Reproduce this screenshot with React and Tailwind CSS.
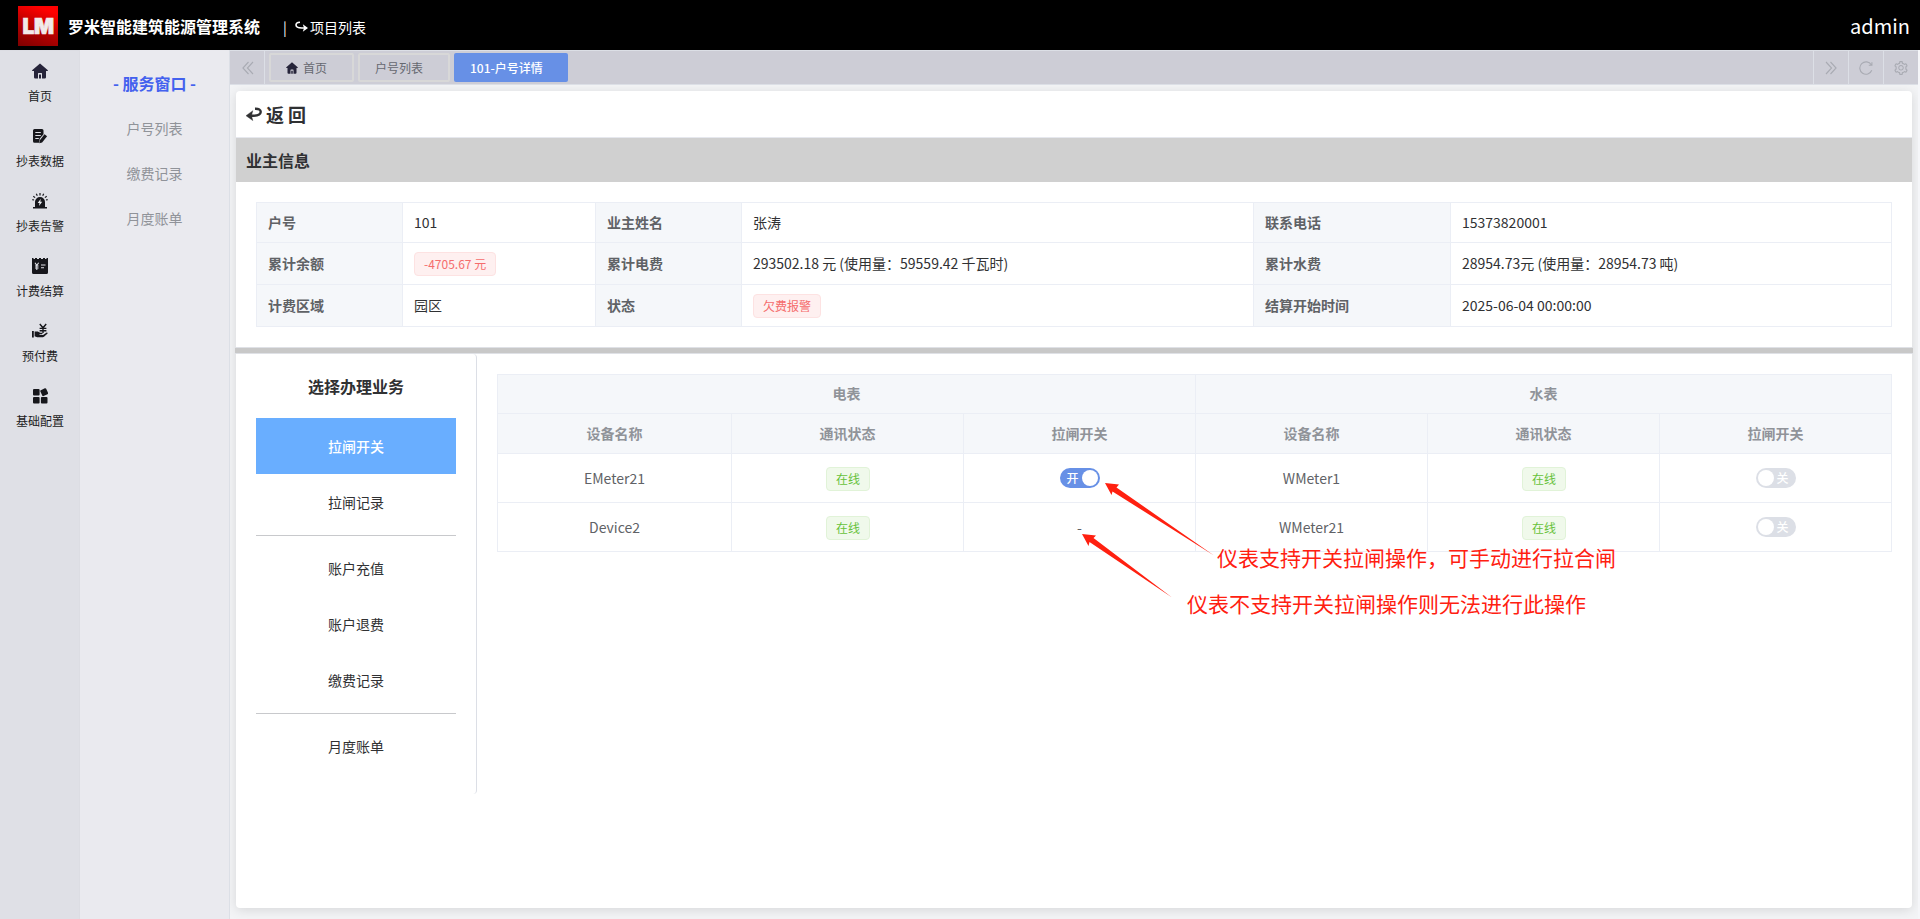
import { AiOutlineSetting } from 'react-icons/ai'

const HomeIcon = ({ className = '' }) => (
  <svg viewBox="0 0 16 16" className={`shrink-0 ${className}`} fill="#26243a">
    <path d="M8 .4 15.6 6.9c.6.5.3 1.1-.4 1.1H14v6.200q0 1.300-1.300 1.300H10V10.500q0-.5-.5-.5h-3q-.5 0-.5.5v5H3.300Q2 15.500 2 14.200V8H.8C.1 8-.2 7.400.4 6.900Z" />
    <path d="M7 11.500h2v4H7z" />
  </svg>
)

const ReadingIcon = ({ className = '' }) => (
  <svg viewBox="0 0 16 16" className={className} fill="#17171c">
    <path d="M2.500 1h7.500q1.500 0 1.500 1.500v3.800L7.800 10.500 7 14.800H2.500Q1 14.800 1 13.300V2.500Q1 1 2.500 1Z" />
    <path d="M3.300 4.500h5.500M3.300 7.500h5.500M3.300 10.500h3.500" stroke="#dfe0e6" strokeWidth="1" fill="none" />
    <path d="m12.500 6.200 2.600 2-5 6.200-2.800.9.400-2.900z" />
  </svg>
)

const AlarmIcon = ({ className = '' }) => (
  <svg viewBox="0 0 16 16" className={className} fill="#17171c">
    <path d="M3 14V9a5 5 0 0 1 10 0v5h2v1.500H1V14z" />
    <path d="M8 0v2.500M4.300.8l1 2M11.700.8l-1 2M1.300 3.200l1.800 1.400M14.700 3.200l-1.800 1.400M.3 6.600l1.700.4M15.700 6.600 14 7" stroke="#17171c" strokeWidth="1.200" />
    <path d="M8.800 5.800 5.700 10h1.800l-.5 3 3.200-4.200H8.300z" fill="#eef0f4" />
  </svg>
)

const BillIcon = ({ className = '' }) => (
  <svg viewBox="0 0 16 16" className={className} fill="#17171c">
    <path d="M0 0h1.500v1h1.500V0h2v1h2V0h2v1h2V0h2v1h1.500V0H16v14.500q0 1.500-1.500 1.500h-13Q0 16 0 14.500Z" />
    <path d="m3 4.800 1.800 2.700 1.800-2.700M4.800 7.500v4.500M3 8h3.600M3 10h3.600M9 7h4.500M9 9.800h3" stroke="#dfe0e6" strokeWidth="1.100" fill="none" />
  </svg>
)

const PrepayIcon = ({ className = '' }) => (
  <svg viewBox="0 0 16 16" className={className} fill="#17171c">
    <path d="M0 8h1.800v6.500H0zM2.600 8.500h3.200l2.400 1.200h2q1 .9-.2 1.600H7.500v.6h3.600l3.600-2.300q1.200 0 .9 1l-3.600 3.200q-.6.400-1.200.4H5.200l-2.600-1z" />
    <path d="m7.800 1 3.200 3.800L14.200 1M11 4.800V10M7.600 5.400h6.800M7.600 7.800h6.800" stroke="#17171c" strokeWidth="1.400" fill="none" />
  </svg>
)

const ConfigIcon = ({ className = '' }) => (
  <svg viewBox="0 0 16 16" className={className} fill="#17171c">
    <rect x="1" y="1" width="6.600" height="6.600" rx="1" />
    <rect x="1" y="8.900" width="6.600" height="6.600" rx="1" />
    <rect x="8.900" y="8.900" width="6.600" height="6.600" rx="1" />
    <rect x="9" y="1" width="6.400" height="6.400" rx="1" transform="rotate(-25 12.200 4.200)" />
  </svg>
)

const BackIcon = () => (
  <svg viewBox="0 0 16 14" className="w-4 h-3.5 shrink-0" fill="none" stroke="#303133">
    <path d="M9 1.800q5.800-.2 5.700 3.200-.2 3.700-7.200 3.700H3" strokeWidth="2.400" />
    <path d="M6.800 3.700 0 8.700l6.800 4.900-1.300-4.900z" fill="#303133" stroke="#303133" strokeWidth=".4" />
  </svg>
)

const ForwardIcon = () => (
  <svg viewBox="0 0 13 11" className="w-[13px] h-[11px] shrink-0" fill="none" stroke="#fff">
    <path d="M5 1.200Q.9 1.400 1 4q.2 3 5.800 3H10" strokeWidth="1.600" />
    <path d="M7.800 3.300 13 7l-5.200 3.700L9 7z" fill="#fff" stroke="none" />
  </svg>
)

const DoubleChevron = ({ flip }) => (
  <svg viewBox="0 0 12 14" className={`w-3 h-3.5 ${flip ? 'rotate-180' : ''}`} fill="none" stroke="#a9abb3" strokeWidth="1.100">
    <path d="M6.500 1 .9 7l5.600 6M11 1 5.400 7l5.600 6" />
  </svg>
)

const mainMenu = [
  { label: '首页', icon: HomeIcon },
  { label: '抄表数据', icon: ReadingIcon },
  { label: '抄表告警', icon: AlarmIcon },
  { label: '计费结算', icon: BillIcon },
  { label: '预付费', icon: PrepayIcon },
  { label: '基础配置', icon: ConfigIcon },
]

const subMenu = ['户号列表', '缴费记录', '月度账单']

const ownerInfo = [
  [
    { label: '户号', value: '101' },
    { label: '业主姓名', value: '张涛' },
    { label: '联系电话', value: '15373820001' },
  ],
  [
    { label: '累计余额', value: '-4705.67 元', tag: true },
    { label: '累计电费', value: '293502.18 元 (使用量：59559.42 千瓦时)' },
    { label: '累计水费', value: '28954.73元 (使用量：28954.73 吨)' },
  ],
  [
    { label: '计费区域', value: '园区' },
    { label: '状态', value: '欠费报警', tag: true },
    { label: '结算开始时间', value: '2025-06-04 00:00:00' },
  ],
]

const services = [['拉闸开关', '拉闸记录'], ['账户充值', '账户退费', '缴费记录'], ['月度账单']]

const meters = [
  [{ name: 'EMeter21', power: 'on' }, { name: 'WMeter1', power: 'off' }],
  [{ name: 'Device2', power: null }, { name: 'WMeter21', power: 'off' }],
]

const Tag = ({ type, children }) => (
  <span
    className={`inline-flex items-center h-6 px-[9px] rounded border text-xs ${
      type === 'danger' ? 'bg-[#fef0f0] border-[#fde2e2] text-[#f56c6c]' : 'bg-[#f0f9eb] border-[#e1f3d8] text-[#67c23a]'
    }`}
  >
    {children}
  </span>
)

const Switch = ({ on }) => (
  <span
    className={`flex items-center justify-between w-10 h-5 rounded-full text-xs font-medium text-white ${
      on ? 'bg-[#6790e6] pl-[7px] pr-0.5' : 'bg-[#dcdfe6] pl-0.5 pr-[7px] flex-row-reverse'
    }`}
  >
    <span className="leading-5">{on ? '开' : '关'}</span>
    <span className="w-4 h-4 rounded-full bg-white" />
  </span>
)

const Header = () => (
  <header className="h-[50px] bg-black text-white flex items-center pl-[18px] pr-2.5 shrink-0">
    <div className="w-10 h-10 mt-0.5 bg-[linear-gradient(20deg,#7d0000,#c00000_50%,#ff0000_85%)] flex items-center justify-center">
      <span className="font-['Inter',sans-serif] font-black text-[21px] leading-none tracking-[-0.5px] text-[#f1eaea] [-webkit-text-stroke:0.7px_#f1eaea]">LM</span>
    </div>
    <h1 className="ml-2.5 mt-px text-base font-bold">罗米智能建筑能源管理系统</h1>
    <div className="flex items-center ml-[23px] mt-[3px] text-sm">
      <span className="w-3">|</span>
      <ForwardIcon />
      <span className="ml-0.5">项目列表</span>
    </div>
    <span className="ml-auto mt-0.5 text-xl">admin</span>
  </header>
)

const TabBar = () => (
  <div className="flex h-[35px] mr-0.5 bg-[#cdcdd6] border-y border-[#dcdfe6] text-xs text-[#666870] shrink-0">
    <div className="w-[35px] pl-0.5 border-r border-[#dcdfe6] flex items-center justify-center"><DoubleChevron /></div>
    <div className="flex flex-1 gap-1 pl-1 pt-0.5">
      <div className="w-[85px] h-[29px] border-2 border-[#d8d8d8] rounded-xs flex items-center pl-[15px]">
        <HomeIcon className="w-3 h-3 mr-[5px]" />首页
      </div>
      <div className="w-[92px] h-[29px] border-2 border-[#d8d8d8] rounded-xs flex items-center pl-[15px]">户号列表</div>
      <div className="w-[114px] h-[29px] bg-[#6790e6] rounded-xs flex items-center pl-4 font-medium text-white">101-户号详情</div>
    </div>
    <div className="w-[35px] border-l border-[#dcdfe6] flex items-center justify-center"><DoubleChevron flip /></div>
    <div className="w-[35px] border-l border-[#dcdfe6] flex items-center justify-center">
      <svg viewBox="0 0 14 14" className="w-3.5 h-3.5" fill="none" stroke="#a9abb3" strokeWidth="1.100">
        <path d="M12.800 9.300A6.200 6.200 0 1 1 12.300 3.800M12.900 1.200V4.200H9.800" />
      </svg>
    </div>
    <div className="w-[35px] border-l border-[#dcdfe6] flex items-center justify-center">
      <AiOutlineSetting className="w-4 h-4 text-[#a9abb3]" />
    </div>
  </div>
)

const OwnerTable = () => (
  <div className="mx-5 mt-5 border-t border-l border-[#ebeef5] text-sm text-[#303133]">
    {ownerInfo.map((row, i) => (
      <div
        key={i}
        className={`grid grid-cols-[146px_193px_146px_512px_197px_441px] ${i === 0 ? 'h-10' : 'h-[42px]'}`}
      >
        {row.map(({ label, value, tag }) => [
          <div key={label} className="flex items-center pl-[11px] pb-0.5 bg-[#f5f7fa] border-r border-b border-[#ebeef5] font-bold text-[#606266]">{label}</div>,
          <div key={value} className={`flex items-center pl-[11px] border-r border-b border-[#ebeef5] ${tag ? '' : 'pb-0.5'}`}>
            {tag ? <Tag type="danger">{value}</Tag> : value}
          </div>,
        ])}
      </div>
    ))}
  </div>
)

const cell = 'flex items-center justify-center border-r border-b border-[#ebeef5]'

const MeterTable = () => (
  <div className="w-[1395px] ml-5 mt-5 self-start border-t border-l border-[#ebeef5] text-sm text-[#606266] grid grid-cols-[234px_repeat(5,232px)] grid-rows-[39px_40px_49px_49px]">
    {['电表', '水表'].map(title => (
      <div key={title} className={`${cell} col-span-3 pb-0.5 bg-[#f5f7fa] font-bold text-[#909399]`}>{title}</div>
    ))}
    {['设备名称', '通讯状态', '拉闸开关', '设备名称', '通讯状态', '拉闸开关'].map((title, i) => (
      <div key={i} className={`${cell} pb-0.5 bg-[#f5f7fa] font-bold text-[#909399]`}>{title}</div>
    ))}
    {meters.flat().map(({ name, power }) => [
      <div key={name} className={cell}>{name}</div>,
      <div key={`${name}-state`} className={`${cell} pl-px pt-0.5`}><Tag type="success">在线</Tag></div>,
      <div key={`${name}-power`} className={cell}>{power ? <Switch on={power === 'on'} /> : '-'}</div>,
    ])}
  </div>
)

const ServicePanel = () => (
  <div className="w-[241px] h-[440px] px-5 border-r border-[#dcdfe6] rounded text-sm text-[#303133] shrink-0">
    <h2 className="h-16 pb-px flex items-center justify-center text-base font-bold">选择办理业务</h2>
    {services.map((group, g) => (
      <div key={g} className={g > 0 ? 'mt-[5px] pt-1 border-t border-[#c8c9cc]' : ''}>
        {group.map(name => (
          <div
            key={name}
            className={`h-14 flex items-center justify-center ${name === '拉闸开关' ? 'bg-[#69aeff] text-white font-medium' : ''}`}
          >
            {name}
          </div>
        ))}
      </div>
    ))}
  </div>
)

// red callouts laid over the meter table
const Annotations = () => (
  <div className="absolute inset-0 pointer-events-none text-[21px] leading-[30px] text-[#ff2010] whitespace-nowrap">
    <svg width="1920" height="919" viewBox="0 0 1920 919" fill="#ff2010">
      <path d="M1105 483 1119 484.500 1116.500 487.500 1214 555.500 1112.500 491.500 1111.500 495Z" />
      <path d="M1082 534 1096 535.500 1093.500 538 1172 597.500 1089.500 542 1088.500 546Z" />
    </svg>
    <span className="absolute left-[1217px] top-[542px]">仪表支持开关拉闸操作，可手动进行拉合闸</span>
    <span className="absolute left-[1187px] top-[588px]">仪表不支持开关拉闸操作则无法进行此操作</span>
  </div>
)

const App = () => (
  <div className="relative w-[1920px] h-[919px] overflow-hidden flex flex-col bg-[#f5f6f9] font-['Noto_Sans_CJK_SC',sans-serif]">
    <Header />
    <div className="flex flex-1 min-h-0">
      <aside className="w-20 bg-[#dfe0e6] border-t border-r border-[#dcdde3] shrink-0">
        {mainMenu.map(({ label, icon: Icon }) => (
          <div key={label} className="h-[65px] pt-3 pl-px flex flex-col items-center">
            <Icon className="w-4 h-4" />
            <span className="mt-2 text-xs leading-[18px] text-[#1c1c22]">{label}</span>
          </div>
        ))}
      </aside>
      <aside className="w-[150px] bg-[#eaeaef] border-r border-[#dcdfe6] shrink-0 text-center">
        <div className="mt-5 mb-2 text-base leading-[27px] font-bold text-[#4361ee]">- 服务窗口 -</div>
        {subMenu.map(name => (
          <div key={name} className="h-[45px] flex items-center justify-center text-sm text-[#909399]">{name}</div>
        ))}
      </aside>
      <main className="flex-1 min-w-0 flex flex-col">
        <TabBar />
        <div className="flex-1 min-h-0 mr-0.5 px-1.5 pt-1.5 pb-[11px] bg-[#f3f4f6] overflow-hidden">
          <div className="h-full flex flex-col bg-white rounded shadow-[0_2px_12px_rgba(0,0,0,0.12)]">
            <div className="h-[47px] pl-2.5 flex items-center gap-1 border-b border-[#e6e8ee] text-lg font-bold text-[#303133]">
              <BackIcon />返 回
            </div>
            <div className="h-11 pl-2.5 flex items-center bg-[#d0d0d0] text-base font-bold text-[#303133]">业主信息</div>
            <OwnerTable />
            <div className="-mx-px mt-5 h-[7px] bg-[#c8c8c8] border-y border-[#dfe1e6] shrink-0" />
            <div className="flex">
              <ServicePanel />
              <MeterTable />
            </div>
          </div>
        </div>
      </main>
    </div>
    <Annotations />
  </div>
)

export default App
